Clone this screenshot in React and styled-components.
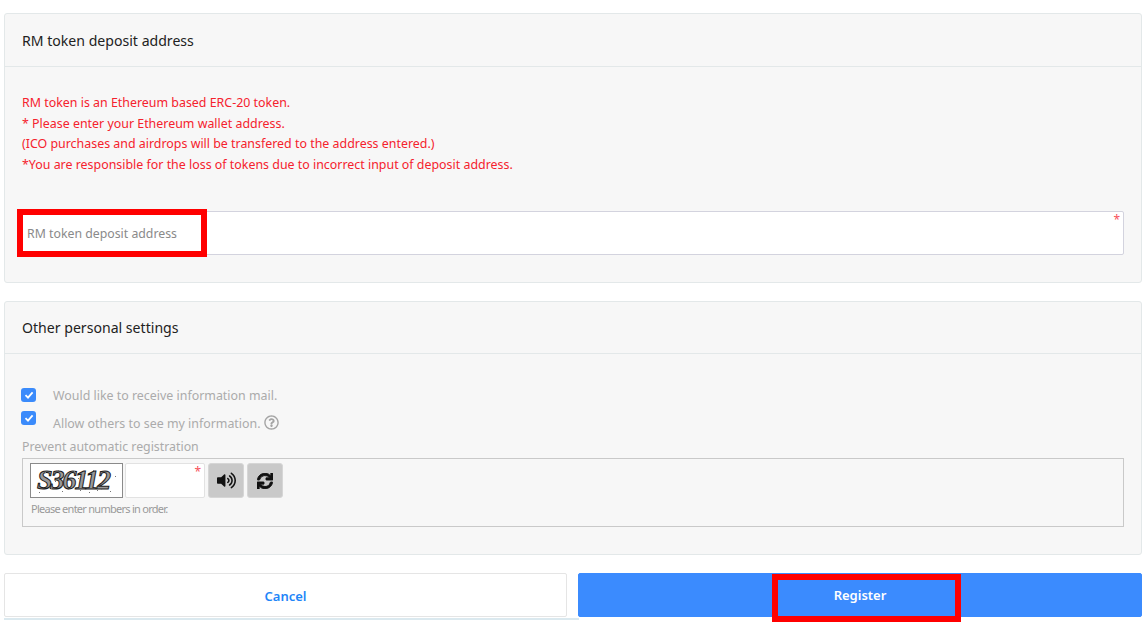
import styled, { createGlobalStyle } from "styled-components";
import { FaVolumeUp, FaSync, FaRegQuestionCircle } from "react-icons/fa";

const Global = createGlobalStyle`
  html, body {
    margin: 0;
    background: #fff;
    font-family: "Noto Sans", "Open Sans", sans-serif;
  }
`
const Page = styled.div`
  width: 1138px;
  padding: 13px 3px 0 4px;
  height: 609px;
  overflow: hidden;
  position: relative;
  display: flex;
  flex-direction: column;
`
const Panel = styled.section`
  height: ${props => props.h}px;
  flex: none;
  box-sizing: border-box;
  background: #f7f7f7;
  border: 1px solid #e3e8e9;
  border-radius: 3px;
  margin-bottom: 18px;
`
const PanelHead = styled.h2`
  margin: 0;
  height: ${props => props.h}px;
  box-sizing: border-box;
  border-bottom: 1px solid #e3e8e9;
  padding-left: 17px;
  display: flex;
  align-items: center;
  font-size: 14.1px;
  font-weight: 400;
  color: #222;
`
const Notice = styled.div`
  padding: 26px 0 0 17px;
  font-size: 12.42px;
  line-height: 20.7px;
  color: #f5222d;
`
const InputWrap = styled.div`
  position: relative;
  margin: 35px 17px 0 14px;
  height: 44px;
  box-sizing: border-box;
  background: #fff;
  border: 1px solid #d3d3de;
  border-radius: 2px;
  display: flex;
  align-items: center;
  padding: 2px 0 0 7px;
  font-size: 12.3px;
  color: #8a8a8a;
`
const Star = styled.span`
  position: absolute;
  top: ${props => props.top}px;
  right: ${props => props.right}px;
  color: #f8505a;
  font-size: 12px;
  line-height: 12px;
`
const OtherBody = styled.div`
  padding: 34px 17px 0;
`
const CheckRow = styled.div`
  display: flex;
  align-items: ${props => props.end ? "flex-start" : "center"};
  height: ${props => props.h}px;
  margin-bottom: ${props => props.gap}px;
  font-size: 12.42px;
  color: #ababab;
`
const CheckBox = styled.span`
  width: 15px;
  height: 14px;
  flex: none;
  margin: 0 17px 0 -1px;
  background: #3b8bfb;
  border-radius: 3px;
  display: flex;
  align-items: center;
  justify-content: center;
`
const Label = styled.span`
  display: flex;
  align-items: center;
  gap: 3px;
  margin-top: ${props => props.top || 0}px;
`
const Help = styled(FaRegQuestionCircle)`
  color: #a5a5a5;
  font-size: 15px;
  margin-top: -3px;
`
const FieldTitle = styled.div`
  font-size: 12.35px;
  line-height: 16px;
  color: #ababab;
  margin-top: 8px;
`
const CaptchaBox = styled.div`
  margin-top: 3px;
  height: 69px;
  box-sizing: border-box;
  border: 1px solid #c9c9c9;
  padding: 4px 7px;
`
const CaptchaRow = styled.div`
  display: flex;
  height: 35px;
`
const CaptchaImage = styled.svg`
  width: 93px;
  height: 35px;
  flex: none;
  box-sizing: border-box;
  border: 1px solid #8a8a8a;
  background: #fff;
  margin-right: 2px;
`
const CaptchaInput = styled.div`
  position: relative;
  width: 80px;
  box-sizing: border-box;
  background: #fff;
  border: 1px solid #e2e2e2;
  border-radius: 2px;
  margin-right: 3px;
`
const IconButton = styled.button`
  width: 36px;
  padding: 0;
  margin-right: 3px;
  border: 1px solid #d6d6d6;
  border-radius: 3px;
  background: #c9c9c9;
  color: #111;
  font-size: ${props => props.size}px;
  display: flex;
  align-items: center;
  justify-content: center;
`
const RefreshIcon = styled(FaSync)`
  stroke: #111;
  stroke-width: 30px;
`
const CaptchaHelp = styled.div`
  margin: 4px 0 0 1px;
  font-size: 11px;
  line-height: 14px;
  letter-spacing: -0.73px;
  color: #9a9a9a;
`
const Buttons = styled.div`
  display: flex;
  gap: 11px;
  height: 44px;
  flex: none;
`
const Btn = styled.button`
  width: ${props => props.w}px;
  flex: none;
  padding: ${props => props.primary ? "0 0 1px" : "2px 0 0"};
  box-sizing: border-box;
  border: 1px solid ${props => props.primary ? "#3b8bfe" : "#e5e5e5"};
  border-radius: 2px;
  background: ${props => props.primary ? "#3b8bfe" : "#fff"};
  color: ${props => props.primary ? "#fff" : "#1f86f8"};
  font-family: inherit;
  font-size: 13px;
  font-weight: 600;
`
const BottomLine = styled.div`
  height: 2px;
  margin-top: 1px;
  width: 575px;
  background: #dbe9ef;
  flex: none;
`
const Highlight = styled.div`
  position: absolute;
  left: ${props => props.x}px;
  top: ${props => props.y}px;
  width: ${props => props.w}px;
  height: ${props => props.h}px;
  box-sizing: border-box;
  border: 6px solid #ff0000;
  pointer-events: none;
`

const Tick = () => (
  <svg width="10" height="10" viewBox="0 0 10 10" fill="none">
    <path d="M1.5 5.2 L4 7.6 L8.6 2.4" stroke="#fff" strokeWidth="1.8" />
  </svg>
)

// speckle over the captcha letters
const specks = [
  [8, 28], [14, 8], [20, 24], [27, 6], [31, 27], [37, 25], [43, 7], [49, 26], [54, 9],
  [58, 28], [62, 6], [66, 26], [70, 25], [75, 8], [79, 27], [84, 12], [24, 17], [47, 14],
]

const Captcha = () => (
  <CaptchaImage viewBox="0 0 91 33">
    <text
      x="6" y="25"
      fontFamily="Liberation Serif, serif"
      fontStyle="italic"
      fontWeight="700"
      fontSize="28"
      letterSpacing="-2"
      fill="#999"
      stroke="#1c1c1c"
      strokeWidth="1"
    >
      S36112
    </text>
    {specks.map(([x, y], i) => (
      <rect key={i} x={x} y={y} width="1" height="1" fill="#777" />
    ))}
  </CaptchaImage>
)

export default function App() {
  return (
    <>
      <Global />
      <Page>
        <Panel h={270}>
          <PanelHead h={53}>RM token deposit address</PanelHead>
          <Notice>
            RM token is an Ethereum based ERC-20 token.<br />
            * Please enter your Ethereum wallet address.<br />
            (ICO purchases and airdrops will be transfered to the address entered.)<br />
            *You are responsible for the loss of tokens due to incorrect input of deposit address.
          </Notice>
          <InputWrap>
            RM token deposit address
            <Star top={2} right={3}>*</Star>
          </InputWrap>
        </Panel>
        <Panel h={254}>
          <PanelHead h={52}>Other personal settings</PanelHead>
          <OtherBody>
            <CheckRow h={14} gap={9}>
              <CheckBox><Tick /></CheckBox>
              <Label>Would like to receive information mail.</Label>
            </CheckRow>
            <CheckRow end h={20} gap={0}>
              <CheckBox><Tick /></CheckBox>
              <Label top={4}>Allow others to see my information. <Help /></Label>
            </CheckRow>
            <FieldTitle>Prevent automatic registration</FieldTitle>
            <CaptchaBox>
              <CaptchaRow>
                <Captcha />
                <CaptchaInput><Star top={2} right={3}>*</Star></CaptchaInput>
                <IconButton size={19}><FaVolumeUp /></IconButton>
                <IconButton size={16}><RefreshIcon /></IconButton>
              </CaptchaRow>
              <CaptchaHelp>Please enter numbers in order.</CaptchaHelp>
            </CaptchaBox>
          </OtherBody>
        </Panel>
        <Buttons>
          <Btn w={563}>Cancel</Btn>
          <Btn w={564} primary>Register</Btn>
        </Buttons>
        <BottomLine />
        <Highlight x={17} y={209} w={190} h={48} />
        <Highlight x={772} y={574} w={189} h={48} />
      </Page>
    </>
  )
}
